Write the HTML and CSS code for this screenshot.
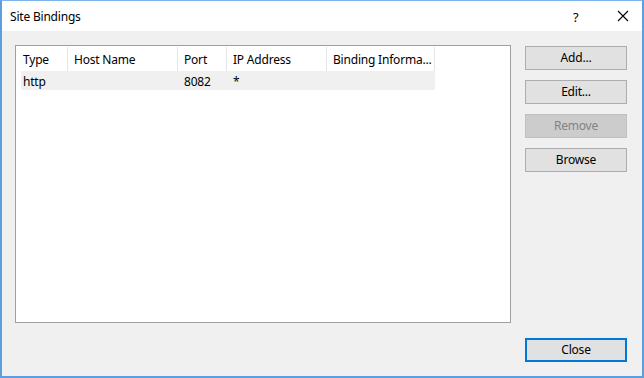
FILE: index.html
```html
<!DOCTYPE html>
<html>
<head>
<meta charset="utf-8">
<link rel="stylesheet" href="styles.css">
</head>
<body>
<div class="window">
  <div class="titlebar">
    <span class="title">Site Bindings</span>
    <span class="help">?</span>
    <span class="close-x">
      <svg width="12" height="12" viewBox="0 0 12 12"><path d="M1 1 L11 11 M11 1 L1 11" stroke="#000" stroke-width="1.1" fill="none"/></svg>
    </span>
  </div>
  <div class="content">
    <div class="list">
      <div class="thead">
        <div class="th c1">Type</div>
        <div class="th c2">Host Name</div>
        <div class="th c3">Port</div>
        <div class="th c4">IP Address</div>
        <div class="th c5">Binding Informa...</div>
      </div>
      <div class="trow">
        <div class="td d1">http</div>
        <div class="td d2"></div>
        <div class="td d3">8082</div>
        <div class="td d4">*</div>
        <div class="td d5"></div>
      </div>
    </div>
    <div class="side">
      <div class="btn">Add...</div>
      <div class="btn">Edit...</div>
      <div class="btn disabled">Remove</div>
      <div class="btn">Browse</div>
      <div class="btn default">Close</div>
    </div>
  </div>
</div>
</body>
</html>
```
FILE: styles.css
```css
html, body {
  margin: 0;
  padding: 0;
  background: #f0f0f0;
}
body {
  font-family: "Noto Sans", "Open Sans", sans-serif;
  font-size: 12px;
  letter-spacing: -0.2px;
  color: #000;
}
.window {
  width: 644px;
  height: 378px;
  box-sizing: border-box;
  border-top: 1px solid #7eb4ea;
  border-left: 2px solid #5d9ede;
  border-right: 2px solid #5d9ede;
  border-bottom: 2px solid #5d9ede;
  background: #f0f0f0;
  display: flex;
  flex-direction: column;
}
.titlebar {
  height: 30px;
  background: #fff;
  display: flex;
  align-items: center;
}
.title {
  margin-left: 8px;
  flex: 1;
}
.help {
  width: 12px;
  margin-right: 32px;
  font-size: 13px;
  padding-top: 1px;
}
.close-x {
  display: flex;
  margin-right: 13px;
}
.content {
  flex: 1;
  display: flex;
  padding: 14px 0 0 13px;
  gap: 14px;
}
.list {
  width: 496px;
  height: 278px;
  box-sizing: border-box;
  border: 1px solid #a0a0a0;
  background: #fff;
}
.thead {
  display: flex;
  height: 25px;
  padding-top: 1px;
  box-sizing: border-box;
}
.th {
  box-sizing: border-box;
  border-right: 1px solid #e5e5e5;
  padding-left: 6px;
  padding-top: 2px;
  line-height: 22px;
  white-space: nowrap;
  overflow: hidden;
}
.c1 { width: 52px; padding-left: 7px; }
.c2 { width: 110px; }
.c3 { width: 49px; }
.c4 { width: 100px; }
.c5 { width: 108px; }
.trow {
  display: flex;
  height: 19px;
  margin-left: 5px;
  width: 414px;
  background: #f0f0f0;
}
.td {
  box-sizing: border-box;
  line-height: 19px;
  padding-top: 1px;
  padding-left: 6px;
}
.d1 { width: 47px; padding-left: 2px; }
.d2 { width: 110px; }
.d3 { width: 49px; }
.d4 { width: 100px; }
.d5 { width: 108px; }
.side {
  width: 102px;
  display: flex;
  flex-direction: column;
  gap: 10px;
  padding-top: 1px;
}
.btn {
  height: 24px;
  box-sizing: border-box;
  border: 1px solid #adadad;
  background: #e1e1e1;
  text-align: center;
  line-height: 22px;
}
.btn.disabled {
  background: #cccccc;
  border-color: #bfbfbf;
  color: #838383;
}
.btn.default {
  margin-top: auto;
  margin-bottom: 14px;
  border: 2px solid #0078d7;
  line-height: 20px;
}
```
